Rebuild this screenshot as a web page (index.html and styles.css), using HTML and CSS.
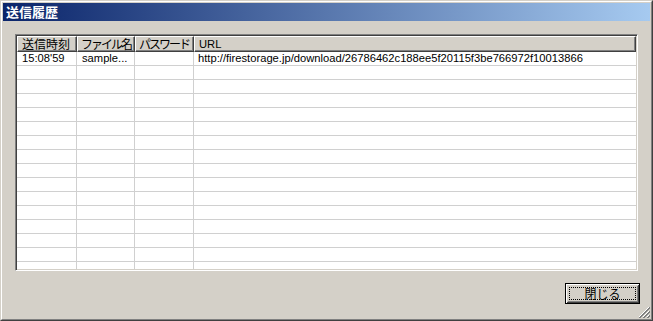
FILE: index.html
```html
<!DOCTYPE html>
<html lang="ja">
<head>
<meta charset="utf-8">
<title>送信履歴</title>
<link rel="stylesheet" href="styles.css">
</head>
<body>
<div class="window">
  <div class="frame">
    <div class="titlebar"><span class="title">送信履歴</span></div>
    <div class="content">
      <div class="listview">
        <div class="header">
          <div class="hcell c1">送信時刻</div>
          <div class="hcell c2 kana">ファイル名</div>
          <div class="hcell c3 kana">パスワード</div>
          <div class="hcell c4">URL</div>
        </div>
        <div class="rows">
          <div class="row"><div class="cell c1">15:08'59</div><div class="cell c2">sample...</div><div class="cell c3"></div><div class="cell c4">http://firestorage.jp/download/26786462c188ee5f20115f3be766972f10013866</div></div>
          <div class="row"><div class="cell c1"></div><div class="cell c2"></div><div class="cell c3"></div><div class="cell c4"></div></div>
          <div class="row"><div class="cell c1"></div><div class="cell c2"></div><div class="cell c3"></div><div class="cell c4"></div></div>
          <div class="row"><div class="cell c1"></div><div class="cell c2"></div><div class="cell c3"></div><div class="cell c4"></div></div>
          <div class="row"><div class="cell c1"></div><div class="cell c2"></div><div class="cell c3"></div><div class="cell c4"></div></div>
          <div class="row"><div class="cell c1"></div><div class="cell c2"></div><div class="cell c3"></div><div class="cell c4"></div></div>
          <div class="row"><div class="cell c1"></div><div class="cell c2"></div><div class="cell c3"></div><div class="cell c4"></div></div>
          <div class="row"><div class="cell c1"></div><div class="cell c2"></div><div class="cell c3"></div><div class="cell c4"></div></div>
          <div class="row"><div class="cell c1"></div><div class="cell c2"></div><div class="cell c3"></div><div class="cell c4"></div></div>
          <div class="row"><div class="cell c1"></div><div class="cell c2"></div><div class="cell c3"></div><div class="cell c4"></div></div>
          <div class="row"><div class="cell c1"></div><div class="cell c2"></div><div class="cell c3"></div><div class="cell c4"></div></div>
          <div class="row"><div class="cell c1"></div><div class="cell c2"></div><div class="cell c3"></div><div class="cell c4"></div></div>
          <div class="row"><div class="cell c1"></div><div class="cell c2"></div><div class="cell c3"></div><div class="cell c4"></div></div>
          <div class="row"><div class="cell c1"></div><div class="cell c2"></div><div class="cell c3"></div><div class="cell c4"></div></div>
          <div class="row"><div class="cell c1"></div><div class="cell c2"></div><div class="cell c3"></div><div class="cell c4"></div></div>
          <div class="row"><div class="cell c1"></div><div class="cell c2"></div><div class="cell c3"></div><div class="cell c4"></div></div>
        </div>
      </div>
      <div class="buttons">
        <button class="btn default"><span class="focus">閉じる</span></button>
      </div>
    </div>
    <svg class="grip" width="12" height="12" viewBox="0 0 12 12">
      <g stroke-width="1" shape-rendering="crispEdges">
        <line x1="11" y1="1" x2="1" y2="11" stroke="#ffffff"/>
        <line x1="12" y1="1" x2="1" y2="12" stroke="#808080"/>
        <line x1="12" y1="2" x2="2" y2="12" stroke="#808080"/>
        <line x1="11" y1="5" x2="5" y2="11" stroke="#ffffff"/>
        <line x1="12" y1="5" x2="5" y2="12" stroke="#808080"/>
        <line x1="12" y1="6" x2="6" y2="12" stroke="#808080"/>
        <line x1="11" y1="9" x2="9" y2="11" stroke="#ffffff"/>
        <line x1="12" y1="9" x2="9" y2="12" stroke="#808080"/>
        <line x1="12" y1="10" x2="10" y2="12" stroke="#808080"/>
      </g>
    </svg>
  </div>
</div>
</body>
</html>
```
FILE: styles.css
```css
html, body {
  margin: 0;
  padding: 0;
  background: #d4d0c8;
}
body {
  font-family: "Liberation Sans", "Noto Sans CJK JP", sans-serif;
  font-size: 11.2px;
  color: #000;
}
.window {
  width: 653px;
  height: 321px;
  box-sizing: border-box;
  border: 1px solid;
  border-color: #d4d0c8 #404040 #404040 #d4d0c8;
  background: #d4d0c8;
}
.frame {
  position: relative;
  height: 100%;
  box-sizing: border-box;
  border: 1px solid;
  border-color: #ffffff #808080 #808080 #ffffff;
  padding: 1px;
  display: flex;
  flex-direction: column;
}
.titlebar {
  height: 18px;
  flex: none;
  background: linear-gradient(to right, #0a246a, #a6caf0);
  display: flex;
  align-items: center;
  padding-left: 3px;
}
.title {
  color: #fff;
  font-family: "Noto Sans CJK JP", sans-serif;
  font-weight: bold;
  font-size: 13px;
  line-height: 18px;
}
.content {
  flex: 1;
  padding: 13px 0 0 12px;
  display: flex;
  flex-direction: column;
}
.listview {
  width: 623px;
  height: 237px;
  box-sizing: border-box;
  border: 1px solid;
  border-color: #808080 #ffffff #ffffff #808080;
  box-shadow: inset 1px 1px 0 #404040, inset -1px -1px 0 #d4d0c8;
  padding: 1px;
  background: #fff;
  overflow: hidden;
  display: flex;
  flex-direction: column;
}
.header {
  display: flex;
  height: 16px;
  flex: none;
}
.hcell {
  box-sizing: border-box;
  height: 16px;
  background: #d4d0c8;
  border-top: 1px solid #fff;
  border-left: 1px solid #fff;
  border-right: 1px solid #404040;
  border-bottom: 1px solid #404040;
  box-shadow: inset -1px -1px 0 #808080;
  font-family: "Noto Sans CJK JP", sans-serif;
  font-size: 12px;
  line-height: 14px;
  padding-left: 4px;
  white-space: nowrap;
  overflow: hidden;
}
.hcell.kana {
  letter-spacing: -2px;
  padding-left: 3px;
}
.hcell.c4 {
  font-family: "Liberation Sans", sans-serif;
  font-size: 11.2px;
  padding-left: 4px;
}
.c1 { width: 60px; flex: none; }
.c2 { width: 58px; flex: none; }
.c3 { width: 59px; flex: none; }
.c4 { flex: 1; }
.rows {
  flex: 1;
  overflow: hidden;
}
.row {
  display: flex;
  height: 14px;
  box-sizing: border-box;
  border-bottom: 1px solid #d0d0d0;
}
.cell {
  box-sizing: border-box;
  height: 13px;
  border-right: 1px solid #d0d0d0;
  padding-left: 5px;
  line-height: 13px;
  white-space: nowrap;
  overflow: hidden;
}
.cell.c4 {
  border-right: none;
  padding-left: 4px;
}
.buttons {
  display: flex;
  justify-content: flex-end;
  margin-top: 12px;
  padding-right: 10px;
}
.btn {
  width: 75px;
  height: 21px;
  box-sizing: border-box;
  margin: 0;
  padding: 0;
  background: #d4d0c8;
  border: 1px solid #000;
  box-shadow: inset 1px 1px 0 #ffffff, inset -1px -1px 0 #404040, inset 2px 2px 0 #d4d0c8, inset -2px -2px 0 #808080;
  font-family: "Noto Sans CJK JP", sans-serif;
  font-size: 12px;
  color: #000;
  display: flex;
  align-items: stretch;
  justify-content: stretch;
}
.focus {
  flex: 1;
  margin: 3px;
  border: 1px dotted #000;
  display: flex;
  align-items: center;
  justify-content: center;
  line-height: 11px;
}
.grip {
  position: absolute;
  right: 1px;
  bottom: 1px;
}
```
